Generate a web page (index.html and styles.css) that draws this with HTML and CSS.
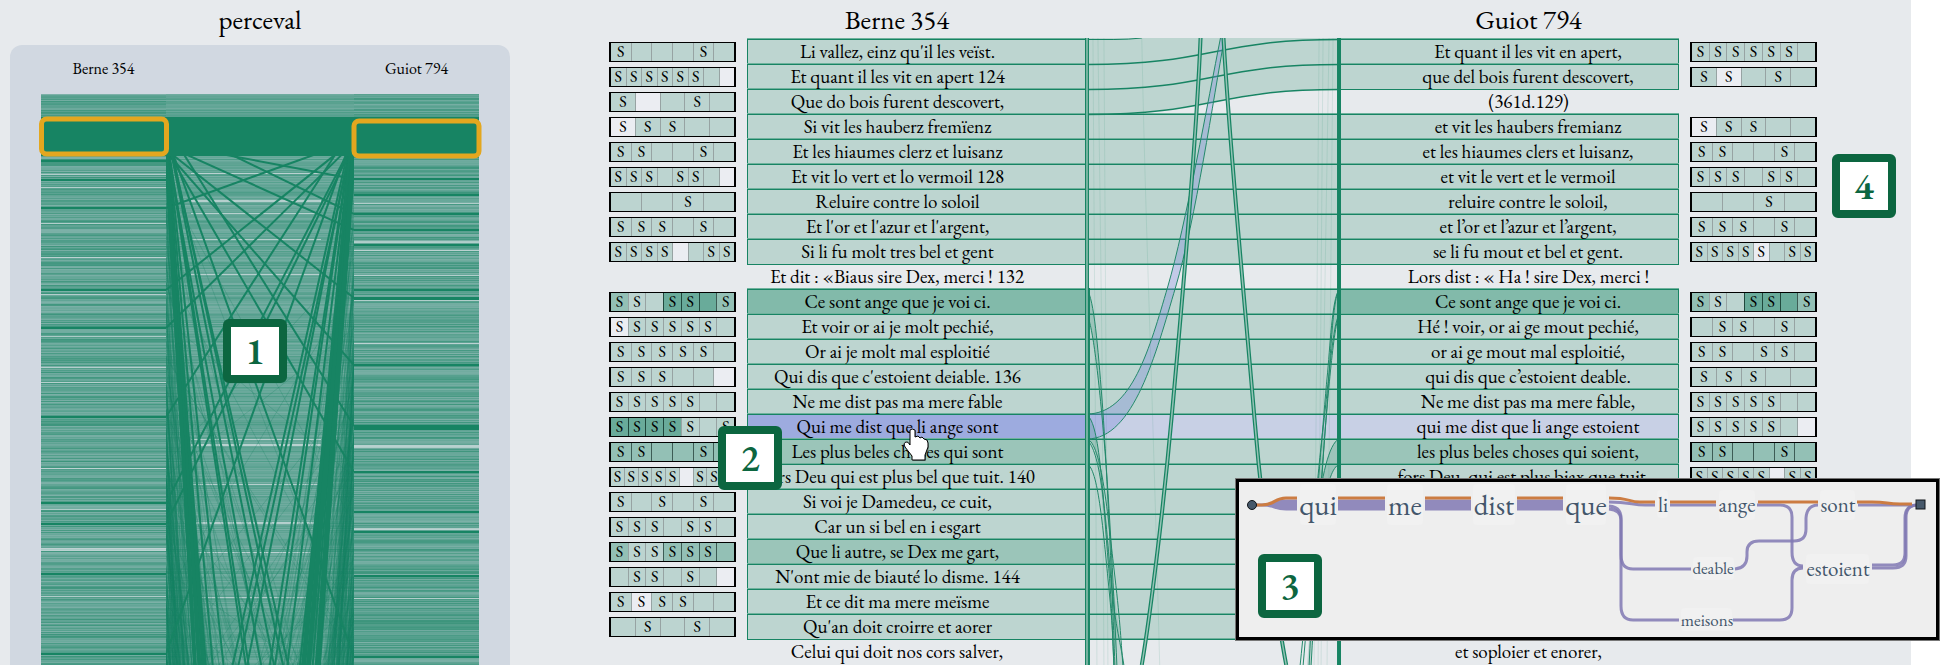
FILE: index.html
```html
<!DOCTYPE html>
<html lang="en">
<head>
<meta charset="utf-8">
<title>perceval</title>
<link rel="stylesheet" href="styles.css">
</head>
<body>
<main class="app">
  <section class="overview">
    <h1 class="heading">perceval</h1>
    <div class="overview-panel">
      <div class="overview-names"><span>Berne 354</span><span></span><span>Guiot 794</span></div>
      <svg class="overview-chart" id="overview" viewBox="0 0 438 580" preserveAspectRatio="none" aria-label="Overview of all shared lines"></svg>
    </div>
  </section>
  <section class="detail">
    <div class="minis" id="minis-left"></div>
    <div class="witness witness-left">
      <h2 class="heading">Berne 354</h2>
      <div class="lines" id="lines-left"></div>
    </div>
    <svg class="links" id="links" viewBox="0 0 260 627" preserveAspectRatio="none" aria-hidden="true"></svg>
    <div class="witness witness-right">
      <h2 class="heading">Guiot 794</h2>
      <div class="lines" id="lines-right"></div>
    </div>
    <div class="minis" id="minis-right"></div>
  </section>
</main>

<aside class="popup">
  <svg class="graph" viewBox="1239 482 697 155">
    <g class="halo">
      <rect x="1300" y="484" width="36" height="41" rx="4"/><rect x="1387" y="484" width="36" height="41" rx="4"/>
      <rect x="1473" y="484" width="42" height="41" rx="4"/><rect x="1566" y="484" width="40" height="41" rx="4"/>
      <rect x="1657" y="490" width="11" height="28" rx="4"/><rect x="1719" y="490" width="36" height="30" rx="4"/>
      <rect x="1820" y="490" width="35" height="30" rx="4"/><rect x="1806" y="554" width="63" height="30" rx="4"/>
      <rect x="1693" y="557" width="41" height="23" rx="4"/><rect x="1681" y="608" width="51" height="23" rx="4"/>
    </g>
    <g class="stream alt">
      <path d="M1252 505H1262C1275 505 1274 501 1286 501H1297M1252 505H1262C1275 505 1274 504 1286 504H1297M1252 505H1262C1275 505 1274 506 1286 506H1297M1252 505H1262C1275 505 1274 509 1286 509H1297"/>
      <path d="M1338 501H1385M1338 504H1385M1338 506H1385M1338 509H1385"/>
      <path d="M1425 501H1471M1425 504H1471M1425 506H1471M1425 509H1471"/>
      <path d="M1517 501H1563M1517 504H1563M1517 506H1563M1517 509H1563"/>
      <path d="M1609 502C1630 502 1632 505 1645 505H1655M1670 505H1716M1757 505H1780Q1792 505 1792 517V552Q1792 566 1803 566"/>
      <path d="M1609 506Q1621 507 1621 518V555Q1621 569 1633 569H1691"/>
      <path d="M1609 509Q1621 510 1621 520V606Q1621 620 1633 620H1679"/>
      <path d="M1735 569Q1747 568 1747 556V552Q1747 541 1759 541H1794Q1806 541 1806 529V518Q1807 505 1818 505"/>
      <path d="M1733 620H1780Q1792 620 1792 608V580Q1792 568 1803 568"/>
      <path d="M1858 505H1912"/>
      <path d="M1872 565H1893Q1905 565 1905 553V518Q1905 505 1917 505"/>
      <path d="M1872 568H1893Q1906 568 1906 556V518Q1906 505 1917 505"/>
    </g>
    <g class="stream main">
      <path d="M1256 505H1262C1275 505 1274 498 1286 498H1297M1338 498H1385M1425 498H1471M1517 498H1563M1609 498C1630 498 1628 502 1640 502H1655M1670 502H1716M1758 502H1818"/>
      <path d="M1857 502H1872C1888 502 1886 504 1900 504H1912"/>
    </g>
    <circle class="node" cx="1252" cy="505" r="4.500"/>
    <rect class="node" x="1916" y="500" width="9" height="9"/>
    <g class="word big"><text x="1318" y="515">qui</text><text x="1405" y="515">me</text><text x="1494" y="515">dist</text><text x="1586" y="515">que</text></g>
    <g class="word"><text x="1663" y="512">li</text><text x="1737" y="512">ange</text><text x="1838" y="512">sont</text><text x="1838" y="576">estoient</text></g>
    <g class="word small"><text x="1713" y="574">deable</text><text x="1707" y="626">meisons</text></g>
  </svg>
</aside>

<svg class="cursor" viewBox="0 0 26 34" aria-hidden="true">
  <path class="cursor-shadow" d="M9 3Q11 1 13 3V10L17 9L21 11L25 13L26 20L23 27V33H10V29L4 21Q1 16 4 15Q7 14 10 19Z"/>
  <path d="M7 2Q9 0 12 2V9L15 8L17 10L19 9L21 11L24 12L25 15V19L22 27V32H9V28L2 19Q0 15 3 14Q5 13 7 17Z"/>
</svg>
<span class="badge badge-1">1</span>
<span class="badge badge-2">2</span>
<span class="badge badge-3">3</span>
<span class="badge badge-4">4</span>
<script src="script.js"></script>
</body>
</html>
```
FILE: styles.css
```css
* { box-sizing: border-box; }
body {
  margin: 0;
  position: relative;
  height: 100vh;
  overflow: hidden;
  background: #fff;
  color: #000;
  font-family: "EB Garamond", "Liberation Serif", serif;
  font-size: 19px;
}
.app {
  display: flex;
  height: 100%;
  margin-right: 45px;
  padding-right: 94px;
  background: #e7eaed;
  overflow: hidden;
}
.heading {
  margin: 0;
  font-size: 27px;
  font-weight: 400;
  line-height: 28px;
  text-align: center;
}
.overview { flex: none; width: 500px; margin-left: 10px; padding-top: 6px; }
.overview-panel {
  margin-top: 11px;
  padding: 13px 31px 0;
  height: 640px;
  border-radius: 12px;
  background: #d1d8e1;
}
.overview-names {
  display: grid;
  grid-template-columns: 125px 1fr 125px;
  height: 36px;
  font-size: 16px;
  line-height: 22px;
  text-align: center;
}
.overview-chart { display: block; width: 438px; height: 580px; overflow: visible; }
.overview-chart .window { fill: none; stroke: #e3a71f; stroke-width: 5; }
.detail { display: flex; flex: 1; min-width: 0; margin-left: 99px; }
.minis { flex: none; width: 127px; padding-top: 39px; }
.mini-row { height: 25px; padding: 3px 0 2px; }
.mini {
  display: flex;
  height: 20px;
  border: 1px solid #000;
  border-width: 1px 2px;
  background: #bcd4d0;
}
.cell {
  flex: 1;
  font-size: 16px;
  line-height: 18px;
  text-align: center;
}
.cell + .cell { border-left: 1px solid #97a3a3; }
.cell.w { background: #ebedf2; }
.cell.m { background: #93c0b5; border-color: #3d5c55; }
.cell.d { background: #69ab9a; border-color: #20483d; }
.witness { flex: none; width: 340px; padding-top: 6px; }
.witness-left { margin-left: 11px; }
.witness-left .heading, .witness-left .line { padding-right: 40px; }
.witness-right { margin-right: 11px; }
.witness-right .heading, .witness-right .line { padding-left: 39px; }
.lines { padding-top: 5px; }
.line {
  height: 25px;
  border-top: 1px solid transparent;
  line-height: 24px;
  text-align: center;
  white-space: nowrap;
}
.line.on {
  background: #bdd5d0;
  border-color: #178463;
  box-shadow: 0 -1px 0 #6fb29d, 0 1px 0 #178463;
}
.witness-left .line.on { border-left: 1px solid #178463; }
.witness-right .line.on { border-right: 1px solid #178463; }
.line.mid { background: #9bc5b9; }
.line.strong { background: #82baaa; }
.line.hover { background: #9dabdf; }
.line.match { background: #c8d0e5; }
.links {
  display: block;
  position: relative;
  flex: 1;
  min-width: 0;
  height: 627px;
  margin: 38px -4px 0 -3px;
}
.links path, .links line { fill: none; }
.links .rule { stroke: #178463; stroke-width: 1; }
.links .rule-soft { stroke: #6fb29d; stroke-width: 1; }
.links .outer { stroke: #178463; stroke-width: 4; }
.links .inner { stroke: #94c3b5; stroke-width: 1.5; }
.links .strand { stroke: #23896a; stroke-width: 1; }
.links .faint { stroke: #178463; stroke-width: 1; opacity: .12; }
.links .ribbon { fill: #7585dc; fill-opacity: .32; }
.links .veil { fill: #178463; fill-opacity: .2; }
.popup {
  position: absolute;
  right: 17px;
  top: 479px;
  width: 703px;
  border: 3px solid #000;
  box-shadow: 0 0 0 1px #777;
  background: #eee;
}
.graph { display: block; width: 697px; height: 155px; }
.halo { fill: #f1f1f1; }
.stream path { fill: none; stroke-width: 3; }
.stream.alt path { stroke: #8078b3; opacity: .85; }
.stream.main path { stroke: #cc7c42; }
.node { fill: #46586a; stroke: #101418; stroke-width: 1; }
.word { font-size: 21px; fill: #43566b; text-anchor: middle; }
.word.big { font-size: 29px; }
.word.small { font-size: 17px; }
.badge {
  position: absolute;
  width: 64px;
  height: 64px;
  border: 8px solid #0c6640;
  border-radius: 6px;
  background: #fff;
  color: #0c6640;
  font-size: 38px;
  font-weight: 600;
  line-height: 48px;
  text-align: center;
}
.badge-1 { left: 223px; top: 319px; }
.badge-2 { left: 718px; top: 426px; }
.badge-3 { right: 634px; top: 554px; }
.badge-4 { right: 60px; top: 154px; }
.cursor { position: absolute; left: 903px; top: 428px; width: 26px; height: 34px; }
.cursor path { fill: #fff; stroke: #000; stroke-width: 1; }
.cursor .cursor-shadow { fill: #000; stroke: none; opacity: .35; }
```
FILE: script.js
```js
// Each row: [text, row classes, syllable marks, syllable shades (w/m/d, "." = default)]
const left = [
  ["Li vallez, einz qu'il les veïst.", "on", "S---S-"],
  ["Et quant il les vit en apert 124", "on", "SSSSSS--", ".......w"],
  ["Que do bois furent descovert,", "on", "S--S-", ".w..."],
  ["Si vit les hauberz fremïenz", "on", "SSS--", "w...."],
  ["Et les hiaumes clerz et luisanz", "on", "SS--S-"],
  ["Et vit lo vert et lo vermoil 128", "on", "SSS-SS--", ".......w"],
  ["Reluire contre lo soloil", "on", "--S-"],
  ["Et l'or et l'azur et l'argent,", "on", "SSS-S-"],
  ["Si li fu molt tres bel et gent", "on", "SSSS--SS", "....w..."],
  ["Et dit : «Biaus sire Dex, merci ! 132", "", ""],
  ["Ce sont ange que je voi ci.", "on strong", "SS-SS-S", "m..dddm"],
  ["Et voir or ai je molt pechié,", "on", "SSSSSS-", "w......"],
  ["Or ai je molt mal esploitié", "on", "SSSSS-"],
  ["Qui dis que c'estoient deiable. 136", "on", "SSS---", ".....w"],
  ["Ne me dist pas ma mere fable", "on", "SSSSS--"],
  ["Qui me dist que li ange sont", "on hover", "SSSSS-S", "dddd..."],
  ["Les plus beles choses qui sont", "on mid", "SS--S-", "mmmmmm"],
  ["Fors Deu qui est plus bel que tuit. 140", "on", "SSSSS-SS-", ".....w..."],
  ["Si voi je Damedeu, ce cuit,", "on", "S-S-S-"],
  ["Car un si bel en i esgart", "on", "SSS-SS-"],
  ["Que li autre, se Dex me gart,", "on mid", "SSSSSS-", "m..mmmm"],
  ["N'ont mie de biauté lo disme. 144", "on", "-SS-S--", "......w"],
  ["Et ce dit ma mere meïsme", "on", "SSSS--", ".w...."],
  ["Qu'an doit croirre et aorer", "on", "-S-S-"],
  ["Celui qui doit nos cors salver,", "", ""]
];
const right = [
  ["Et quant il les vit en apert,", "on", "SSSSSS-"],
  ["que del bois furent descovert,", "on", "SS-S-", ".w..."],
  ["(361d.129)", "", ""],
  ["et vit les haubers fremianz", "on", "SSS--", "w...."],
  ["et les hiaumes clers et luisanz,", "on", "SS--S-"],
  ["et vit le vert et le vermoil", "on", "SSS-SS-"],
  ["reluire contre le soloil,", "on", "--S-"],
  ["et l’or et l’azur et l’argent,", "on", "SSS-S-"],
  ["se li fu mout et bel et gent.", "on", "SSSSS-SS", "....w..."],
  ["Lors dist : « Ha ! sire Dex, merci !", "", ""],
  ["Ce sont ange que je voi ci.", "on strong", "SS-SS-S", "m..dddm"],
  ["Hé ! voir, or ai ge mout pechié,", "on", "-SS-S-"],
  ["or ai ge mout mal esploitié,", "on", "SS-SS-"],
  ["qui dis que c’estoient deable.", "on", "SSS--"],
  ["Ne me dist pas ma mere fable,", "on", "SSSSS--"],
  ["qui me dist que li ange estoient", "on match", "SSSSS--", "......w"],
  ["les plus beles choses qui soient,", "on mid", "SS--S-", "mmmmmm"],
  ["fors Deu ,qui est plus biax que tuit. .", "on", "SSSSS-SS", ".....w.."],
  ["", "on", ""], ["", "on", ""], ["", "on", ""],
  ["", "on", ""], ["", "on", ""], ["", "on", ""],
  ["et soploier et enorer,", "", ""]
];

function fill(side, rows) {
  const lines = document.getElementById("lines-" + side);
  const minis = document.getElementById("minis-" + side);
  rows.forEach(([text, cls, marks, shades = ""]) => {
    const line = document.createElement("div");
    line.className = ("line " + cls).trim();
    line.textContent = text;
    lines.append(line);
    const row = document.createElement("div");
    row.className = "mini-row";
    if (marks) {
      const mini = document.createElement("div");
      mini.className = "mini";
      [...marks].forEach((m, i) => {
        const cell = document.createElement("span");
        cell.className = "cell" + (shades[i] && shades[i] !== "." ? " " + shades[i] : "");
        cell.textContent = m === "S" ? "S" : "";
        mini.append(cell);
      });
      row.append(mini);
    }
    minis.append(row);
  });
}
fill("left", left);
fill("right", right);

// Links between the two columns of verses
(function drawLinks() {
  let s = "";
  const bar = (y, h, c) => { s += `<rect x="3" y="${y}" width="253" height="${h}" fill="${c}"/>`; };
  bar(76, 150, "#bdd5d0");
  bar(251, 350, "#bdd5d0");
  bar(376, 25, "#c8d0e5");
  s += `<path d="M3 0H256V51C130 51 130 76 3 76Z" style="fill:#bdd5d0"/>`;
  for (let i = 3; i <= 24; i++) {
    const y = 1 + i * 25;
    s += `<line class="rule-soft" x1="3" x2="256" y1="${y - .5}" y2="${y - .5}"/><line class="rule" x1="3" x2="256" y1="${y + .5}" y2="${y + .5}"/>`;
  }
  s += `<path class="rule" d="M3 1.500H30Q45 1.500 58 0"/>`;
  [1, 26, 51].forEach(y => {
    s += `<path class="rule" style="stroke-width:1.500" d="M3 ${y + 25.5}C130 ${y + 25.5} 130 ${y + .5} 256 ${y + .5}"/>`;
  });
  ["M9 0L13 627", "M14 0L18 310L20 627", "M20 0L24 627", "M58 0C62 200 68 320 76 627",
   "M236 0L231 627", "M240 0L235 627", "M246 0L241 300L238 627", "M250 0L244 627"]
    .forEach(d => { s += `<path class="faint" d="${d}"/>`; });
  s += `<path class="ribbon" style="fill:#7585dc" d="M3 376C48 376 66 310 84 249S125 60 137 0H141C130 60 112 182 92 249S50 401 3 401Z"/>`;
  s += `<path class="veil" style="fill:#178463" d="M3 252C10 260 14 310 18 360S28 540 31 627H33C30 560 26 470 20 400S8 285 3 277Z"/>
    <path class="veil" style="fill:#178463" d="M3 377C16 385 19 460 26 520S36 590 39 627H33C28 560 22 500 18 460S12 405 3 402Z"/>
    <path class="veil" style="fill:#178463" d="M256 252C249 260 247 310 244 350S234 500 228 627H224C234 500 236 440 240 390S250 285 256 277Z"/>
    <path class="veil" style="fill:#178463" d="M256 401C246 405 238 440 234 480H240C244 440 250 430 256 426Z"/>`;
  ["M3 376C48 376 66 310 84 249S125 60 137 0", "M3 401C50 401 72 316 92 249S130 60 141 0",
   "M3 252C10 260 14 310 18 360S28 540 31 627", "M3 277C8 285 14 330 20 400S30 560 33 627",
   "M3 377C16 385 19 460 24 520S28 590 30 627", "M3 401C18 405 24 480 30 530S37 600 39 627",
   "M3 402C16 412 21 470 26 530S36 600 40 627", "M3 426C14 430 19 490 24 540S29 600 30 627",
   "M256 252C249 260 247 310 244 340S231 500 220 627", "M256 277C250 285 246 340 240 390S230 500 217 627",
   "M256 252C249 262 247 330 243 380S234 520 228 627", "M256 277C250 290 243 380 240 420S230 540 226 627",
   "M256 401C246 405 238 440 234 480", "M256 426C250 430 244 440 240 480"]
    .forEach(d => { s += `<path class="strand" d="${d}"/>`; });
  ["M117 0C112 120 97 280 88 379S66 580 58 627", "M140 0C147 120 162 270 171 379S196 590 203 627"]
    .forEach(d => { s += `<path class="outer" d="${d}"/><path class="inner" d="${d}"/>`; });
  s += `<path class="outer" d="M3 0V627"/><path class="inner" d="M3 0V627"/>
    <path class="rule" d="M5.500 250V627"/><path class="outer" d="M256 0V627"/>`;
  document.getElementById("links").innerHTML = s;
})();

// Whole-text overview: line matches as stripes, displaced matches as diagonals
(function drawOverview() {
  let seed = 354;
  const rnd = () => (seed = (seed * 16807) % 2147483647) / 2147483647;
  const G = "#178463";
  const link = (a, b) => `M125 ${a.toFixed(1)}L313 ${b.toFixed(1)}`;
  let s = `<defs><clipPath id="c"><rect width="438" height="580"/></clipPath><clipPath id="mid"><rect x="125" width="188" height="580"/></clipPath></defs><g clip-path="url(#c)"><rect width="438" height="580" fill="${G}" opacity=".42"/>`;
  for (let y = 0; y < 580; y++) {
    const a = .05 + rnd() * .6, b = .05 + rnd() * .6;
    s += `<rect y="${y}" width="125" height="1" fill="${G}" opacity="${a.toFixed(2)}"/><rect x="313" y="${y}" width="125" height="1" fill="${G}" opacity="${b.toFixed(2)}"/>`;
    s += `<rect x="125" y="${y}" width="188" height="1" fill="${G}" opacity="${((a + b) * .42).toFixed(2)}"/>`;
  }
  const light = (x, w, list) => list.forEach(([y, h]) => { s += `<rect x="${x}" y="${y}" width="${w}" height="${h}" fill="#d1dde0" opacity=".75"/>`; });
  light(0, 125, [[80, 1], [93, 1], [129, 1], [163, 1], [200, 1], [242, 1], [273, 1], [288, 1], [374, 1], [415, 1], [454, 3], [502, 1]]);
  light(313, 125, [[109, 1], [147, 2], [156, 1], [181, 1], [206, 1], [249, 1], [351, 3], [434, 2], [504, 1]]);
  light(150, 130, [[79, 1], [106, 2], [119, 1], [145, 1], [180, 1], [345, 1], [350, 2], [390, 1], [428, 2], [458, 1], [503, 1]]);
  const darkL = [67, 86, 114, 196, 234, 323, 409, 430, 480, 560];
  const darkR = [85, 101, 120, 136, 151, 196, 204, 271, 332, 378, 418, 438, 482, 563];
  darkL.forEach(y => { s += `<rect y="${y - 1}" width="125" height="2" fill="${G}"/>`; });
  darkR.forEach(y => { s += `<rect x="313" y="${y - 1}" width="125" height="${y === 332 ? 5 : y === 204 ? 3 : 2}" fill="${G}"/>`; });
  s += `<g clip-path="url(#mid)" fill="none" stroke="${G}">`;
  for (let i = 0; i < 620; i++) {
    const a = 66 + Math.pow(rnd(), .7) * 620, b = a + 120 + rnd() * 4200;
    s += `<path d="${i % 2 ? link(a, b) : link(b, a)}" stroke-width="1" opacity=".26"/>`;
  }
  const heavy = (t, flip, w) => {
    const y = 28 + rnd() * 30;
    s += `<path d="${flip ? link(t, y) : link(y, t)}" stroke-width="${w}"/>`;
  };
  [114, 196, 234, 323, 409, 430, 560, 868, 905, 980, 1240, 1320, 1560, 1850, 2400, 2900]
    .forEach(t => heavy(t, true, 2));
  [85, 120, 136, 204, 271, 332, 378, 563, 860, 900, 970, 1080, 1250, 1290, 1790, 2200, 2560]
    .forEach(t => heavy(t, false, 2));
  [2050, 2200, 2700].forEach(t => { heavy(t, true, 5); });
  [2650, 3000, 3400].forEach(t => { heavy(t, false, 4); });
  s += `</g><rect y="23" width="438" height="39" fill="${G}"/></g>
    <rect class="window" x="0.500" y="25" width="125" height="35" rx="5"/><rect class="window" x="313" y="27" width="125" height="35" rx="5"/>`;
  document.getElementById("overview").innerHTML = s;
})();
```
